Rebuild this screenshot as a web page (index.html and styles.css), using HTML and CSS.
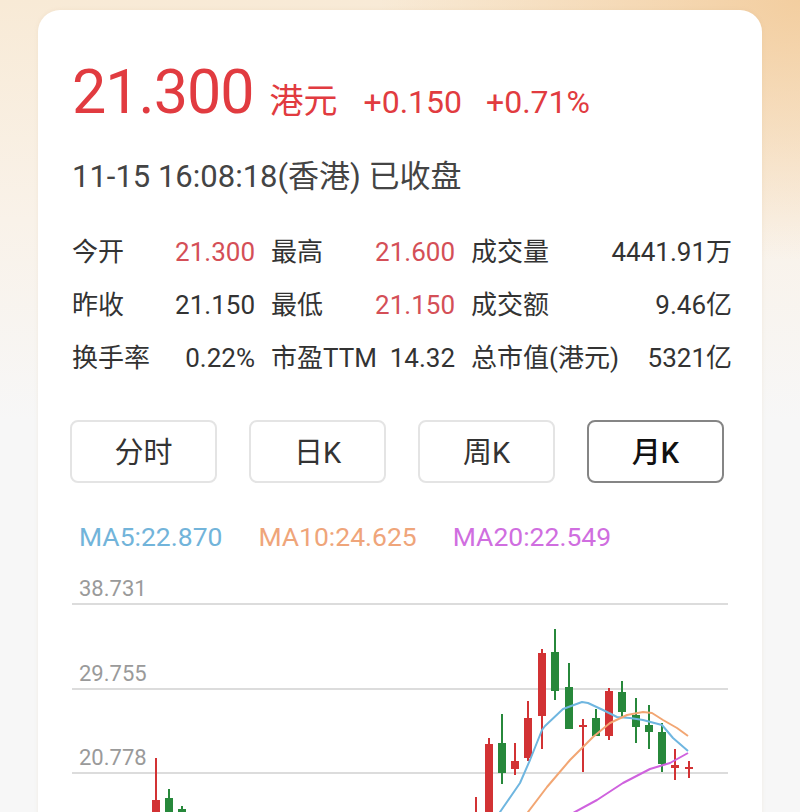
FILE: index.html
```html
<!DOCTYPE html>
<html>
<head>
    <meta charset="utf-8">
    <link rel="stylesheet" href="styles.css">
</head>
<body>
    <div class="card">
        <div class="price-row">
            <span class="price">21.300</span>
            <span class="currency">港元</span>
            <span class="change">+0.150</span>
            <span class="change">+0.71%</span>
        </div>

        <div class="timestamp">11-15 16:08:18(香港) 已收盘</div>

        <div class="stats">
            <div class="stat-row">
                <div class="cell"><span>今开</span><span class="up">21.300</span></div>
                <div class="cell"><span>最高</span><span class="up">21.600</span></div>
                <div class="cell"><span>成交量</span><span>4441.91万</span></div>
            </div>
            <div class="stat-row">
                <div class="cell"><span>昨收</span><span>21.150</span></div>
                <div class="cell"><span>最低</span><span class="up">21.150</span></div>
                <div class="cell"><span>成交额</span><span>9.46亿</span></div>
            </div>
            <div class="stat-row">
                <div class="cell"><span>换手率</span><span>0.22%</span></div>
                <div class="cell"><span>市盈TTM</span><span>14.32</span></div>
                <div class="cell"><span>总市值(港元)</span><span>5321亿</span></div>
            </div>
        </div>

        <div class="tabs">
            <div class="tab">分时</div>
            <div class="tab">日K</div>
            <div class="tab">周K</div>
            <div class="tab active">月K</div>
        </div>

        <div class="ma-row">
            <span class="ma5">MA5:22.870</span>
            <span class="ma10">MA10:24.625</span>
            <span class="ma20">MA20:22.549</span>
        </div>

        <svg class="chart" width="660" height="240" viewBox="72 575 660 240">
            <!-- grid -->
            <g class="grid">
                <line x1="72" y1="604" x2="728" y2="604"/>
                <line x1="72" y1="689" x2="728" y2="689"/>
                <line x1="72" y1="773" x2="728" y2="773"/>
            </g>
            <g class="axis">
                <text x="79" y="596">38.731</text>
                <text x="79" y="681">29.755</text>
                <text x="79" y="765">20.778</text>
            </g>

            <!-- candles: wick + body -->
            <g class="red">
                <line x1="156" y1="758" x2="156" y2="830"/><rect x="152" y="800" width="8" height="30"/>
                <line x1="476" y1="797" x2="476" y2="830"/>
                <line x1="489" y1="738" x2="489" y2="830"/><rect x="485" y="744" width="8" height="86"/>
                <line x1="515" y1="743" x2="515" y2="775"/><rect x="511" y="761" width="8" height="8"/>
                <line x1="528" y1="701" x2="528" y2="761"/><rect x="524" y="718" width="8" height="40"/>
                <line x1="542" y1="649" x2="542" y2="749"/><rect x="538" y="653" width="8" height="63"/>
                <line x1="583" y1="719" x2="583" y2="772"/><rect x="579" y="725" width="8" height="2"/>
                <line x1="609" y1="688" x2="609" y2="740"/><rect x="605" y="691" width="8" height="45"/>
                <line x1="675" y1="749" x2="675" y2="780"/><rect x="671" y="765" width="8" height="3"/>
                <line x1="689" y1="761" x2="689" y2="778"/><rect x="685" y="767" width="8" height="2"/>
            </g>
            <g class="green">
                <line x1="169" y1="789" x2="169" y2="830"/><rect x="165" y="798" width="8" height="14"/>
                <line x1="182" y1="806" x2="182" y2="830"/><rect x="178" y="809" width="8" height="20"/>
                <line x1="502" y1="714" x2="502" y2="784"/><rect x="498" y="743" width="8" height="30"/>
                <line x1="555" y1="629" x2="555" y2="700"/><rect x="551" y="652" width="8" height="39"/>
                <line x1="569" y1="663" x2="569" y2="729"/><rect x="565" y="687" width="8" height="42"/>
                <line x1="596" y1="709" x2="596" y2="736"/><rect x="592" y="718" width="8" height="18"/>
                <line x1="622" y1="681" x2="622" y2="717"/><rect x="618" y="692" width="8" height="20"/>
                <line x1="636" y1="698" x2="636" y2="743"/><rect x="632" y="715" width="8" height="12"/>
                <line x1="649" y1="705" x2="649" y2="749"/><rect x="645" y="725" width="8" height="7"/>
                <line x1="662" y1="723" x2="662" y2="772"/><rect x="658" y="732" width="8" height="32"/>
            </g>

            <!-- moving averages -->
            <polyline class="line-ma5" points="494,825 500,812 520,783 530,760 542,730 545,726 563,709 582,702 588,703 603,710 617,717 630,718 643,720 662,725 673,738 688,751"/>
            <polyline class="line-ma10" points="520,825 528,812 547,787 570,760 593,737 610,723 627,715 643,712 652,713 663,720 677,728 688,736"/>
            <polyline class="line-ma20" points="550,825 575,812 597,800 623,783 650,769 670,763 688,753"/>
        </svg>
    </div>
</body>
</html>
```

FILE: styles.css
```css
html, body {
    overflow: hidden;
}

body {
    margin: 0;
    height: 812px;
    font-family: Roboto, "Noto Sans CJK SC", sans-serif;
    color: #333;
    background:
        radial-gradient(ellipse 420px 260px at 100% 0, #f3cea0 0, rgba(243, 206, 160, 0) 100%),
        linear-gradient(#f8ead6 0, #f9f2e9 220px, #f7f7f7 420px);
}

.card {
    width: 724px;
    height: 840px;
    margin: 10px 0 0 38px;
    padding: 52px 30px 0 34px;
    box-sizing: border-box;
    background-color: #fff;
    border-radius: 22px;
    box-shadow: 0 0 4px rgba(200, 170, 130, 0.15);
}

.price-row {
    display: flex;
    align-items: baseline;
    color: #e13b40;
}

.price {
    font-size: 61px;
    line-height: 60px;
    letter-spacing: -1px;
}

.currency {
    font-size: 34px;
    line-height: 32px;
    margin-left: 16px;
    margin-right: 26px;
}

.change {
    font-size: 32px;
    line-height: 32px;
    margin-right: 24px;
}

.timestamp {
    margin-top: 40px;
    font-size: 31px;
    line-height: 30px;
    color: #444;
}

.stats {
    margin-top: 34px;
}

.stat-row {
    display: grid;
    grid-template-columns: 183px 184px 1fr;
    column-gap: 16px;
    font-size: 26px;
    line-height: 53px;
}

.cell {
    display: flex;
    justify-content: space-between;
}

.up {
    color: #d44f57;
}

.tabs {
    display: grid;
    grid-template-columns: 147px repeat(3, 137px);
    column-gap: 32px;
    margin: 35px 0 0 -2px;
}

.tab {
    height: 63px;
    box-sizing: border-box;
    padding-bottom: 3px;
    border: 2px solid #e4e4e4;
    border-radius: 8px;
    display: flex;
    align-items: center;
    justify-content: center;
    font-size: 29px;
    color: #333;
}

.tab.active {
    border-color: #858585;
    color: #111;
    font-weight: 500;
}

.ma-row {
    display: flex;
    gap: 36px;
    margin-top: 39px;
    padding-left: 7px;
    font-size: 26.5px;
    line-height: 30px;
}

.ma5 { color: #72b4da; }
.ma10 { color: #efa57a; }
.ma20 { color: #d06ee0; }

.chart {
    display: block;
    margin-top: 23px;
}

.grid line {
    stroke: #dcdcdc;
    stroke-width: 2;
}

.axis text {
    font-family: Roboto, sans-serif;
    font-size: 22px;
    fill: #9a9a9a;
}

.red line, .green line {
    stroke-width: 2;
}

.red line { stroke: #d23234; }
.red rect { fill: #d23234; }
.green line { stroke: #27883b; }
.green rect { fill: #27883b; }

.line-ma5, .line-ma10, .line-ma20 {
    fill: none;
    stroke-width: 2;
    stroke-linejoin: round;
}

.line-ma5 { stroke: #6fb6e0; }
.line-ma10 { stroke: #f2a673; }
.line-ma20 { stroke: #cf62de; }
```
